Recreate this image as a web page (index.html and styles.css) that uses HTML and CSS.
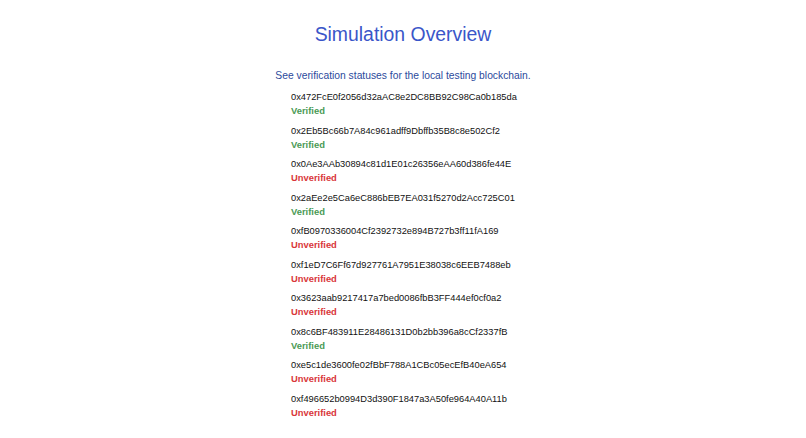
FILE: index.html
```html
<!DOCTYPE html>
<html>
<head>
<meta charset="utf-8">
<link rel="stylesheet" href="styles.css">
</head>
<body>
<main class="page">
  <h1 class="title">Simulation Overview</h1>
  <p class="subtitle">See verification statuses for the local testing blockchain.</p>
  <ul class="list">
    <li class="item"><div class="addr">0x472FcE0f2056d32aAC8e2DC8BB92C98Ca0b185da</div><div class="status ok">Verified</div></li>
    <li class="item"><div class="addr">0x2Eb5Bc66b7A84c961adff9Dbffb35B8c8e502Cf2</div><div class="status ok">Verified</div></li>
    <li class="item"><div class="addr">0x0Ae3AAb30894c81d1E01c26356eAA60d386fe44E</div><div class="status bad">Unverified</div></li>
    <li class="item"><div class="addr">0x2aEe2e5Ca6eC886bEB7EA031f5270d2Acc725C01</div><div class="status ok">Verified</div></li>
    <li class="item"><div class="addr">0xfB0970336004Cf2392732e894B727b3ff11fA169</div><div class="status bad">Unverified</div></li>
    <li class="item"><div class="addr">0xf1eD7C6Ff67d927761A7951E38038c6EEB7488eb</div><div class="status bad">Unverified</div></li>
    <li class="item"><div class="addr">0x3623aab9217417a7bed0086fbB3FF444ef0cf0a2</div><div class="status bad">Unverified</div></li>
    <li class="item"><div class="addr">0x8c6BF483911E28486131D0b2bb396a8cCf2337fB</div><div class="status ok">Verified</div></li>
    <li class="item"><div class="addr">0xe5c1de3600fe02fBbF788A1CBc05ecEfB40eA654</div><div class="status bad">Unverified</div></li>
    <li class="item"><div class="addr">0xf496652b0994D3d390F1847a3A50fe964A40A11b</div><div class="status bad">Unverified</div></li>
  </ul>
</main>
</body>
</html>
```
FILE: styles.css
```css
html, body {
  margin: 0;
  padding: 0;
  background: #ffffff;
}
body {
  font-family: "Liberation Sans", Arial, sans-serif;
}
.page {
  display: flex;
  flex-direction: column;
  align-items: center;
  padding-top: 21px;
}
.title {
  margin: 0;
  font-size: 19.4px;
  font-weight: 400;
  color: #3a56c9;
  line-height: 26px;
}
.subtitle {
  margin: 22px 0 0;
  font-size: 10.3px;
  color: #2c4a9c;
  line-height: 14px;
}
.list {
  list-style: none;
  margin: 7px 0 0;
  padding: 0;
  align-self: center;
  width: 224px;
  display: flex;
  flex-direction: column;
  gap: 6px;
}
.item {
  display: flex;
  flex-direction: column;
}
.addr {
  font-size: 9.3px;
  line-height: 14px;
  color: #111;
  white-space: nowrap;
}
.status {
  font-size: 9.4px;
  font-weight: 700;
  line-height: 13.5px;
}
.ok { color: #4a9a55; }
.bad { color: #d9363a; }
```
